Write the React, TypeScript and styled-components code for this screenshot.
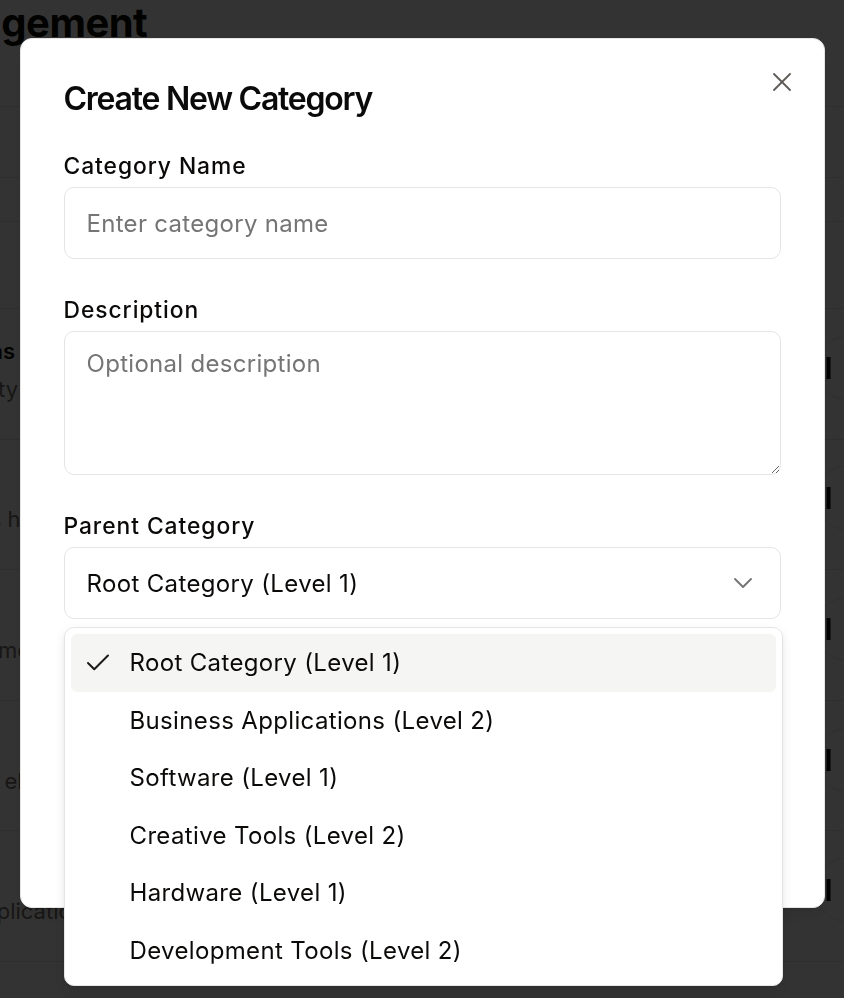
import React from 'react';
import styled, { createGlobalStyle } from 'styled-components';
import { Check, ChevronDown, X } from 'lucide-react';

const GlobalStyle = createGlobalStyle`
  html, body {
    margin: 0;
    padding: 0;
    height: 100%;
    overflow: hidden;
  }
  body {
    font-family: Inter, "Noto Sans", "Liberation Sans", sans-serif;
    background: #ffffff;
    color: #0c0a09;
  }
  * {
    box-sizing: border-box;
  }
`;

// ---- page behind the dialog (scrolled sideways) ----

const Page = styled.div`
  width: 1320px;
  margin-left: -244px;
  min-height: 100vh;
  background: #ffffff;
`;

const PageHeader = styled.header`
  display: flow-root;
  height: 107px;
  padding: 0 24px 0 0;
  border-bottom: 1px solid #e7e5e4;
`;

const PageTitle = styled.h1`
  margin: -5px 0 0 -48px;
  font-size: 40px;
  line-height: 56px;
  font-weight: 700;
  letter-spacing: -0.5px;
`;

const Toolbar = styled.div`
  height: 71px;
  border-bottom: 1px solid #e7e5e4;
`;

const TableHead = styled.div`
  height: 44px;
  border-bottom: 1px solid #e7e5e4;
`;

const HeadRow = styled.div`
  height: 87px;
  border-bottom: 1px solid #e7e5e4;
`;

const Row = styled.div`
  height: 130.6px;
  display: flex;
  align-items: center;
  justify-content: space-between;
  padding: 0 24px;
  border-bottom: 1px solid #e7e5e4;
`;

const NameCell = styled.div`
  display: flex;
  flex-direction: column;
  gap: 12px;
  margin-top: -8px;
`;

const RowName = styled.div`
  font-size: 22px;
  font-weight: 600;
`;

const RowDesc = styled.div`
  font-size: 22px;
  color: #78716c;
`;

const StatusPill = styled.div`
  width: 90px;
  height: 64px;
  margin-right: 147px;
  margin-top: -12px;
  padding-left: 10px;
  border: 1px solid #e7e5e4;
  border-radius: 32px;
  display: flex;
  align-items: center;
  color: #0c0a09;
`;

// ---- dialog ----

const Overlay = styled.div`
  position: fixed;
  inset: 0;
  background: rgba(0, 0, 0, 0.8);
  display: flex;
  justify-content: center;
  align-items: flex-start;
  padding-top: 38px;
`;

const Dialog = styled.div`
  position: relative;
  width: 805px;
  background: #ffffff;
  border: 1px solid #e7e5e4;
  border-radius: 12px;
  padding: 42px 43px 43px;
  box-shadow: 0 10px 15px -3px rgba(0, 0, 0, 0.1), 0 4px 6px -4px rgba(0, 0, 0, 0.1);
`;

const CloseButton = styled.button`
  position: absolute;
  top: 27px;
  right: 26px;
  width: 32px;
  height: 32px;
  padding: 0;
  border: none;
  background: none;
  color: #44403c;
  opacity: 0.85;
  display: flex;
  align-items: center;
  justify-content: center;
`;

const Title = styled.h2`
  margin: 0 0 35px;
  font-size: 32px;
  line-height: 36px;
  font-weight: 600;
  letter-spacing: -1.25px;
  color: #0a0a0a;
`;

const Form = styled.div`
  display: flex;
  flex-direction: column;
  gap: 37px;
`;

const Field = styled.div`
  display: flex;
  flex-direction: column;
  gap: 7px;
`;

const Label = styled.label`
  font-size: 22.8px;
  line-height: 28px;
  font-weight: 500;
  letter-spacing: 0.95px;
  color: #0c0a09;
`;

const TextInput = styled.input`
  height: 72px;
  width: 100%;
  padding: 0 22px;
  border: 1px solid #e7e5e4;
  border-radius: 10px;
  font-family: inherit;
  font-size: 24px;
  letter-spacing: 0.3px;
  color: #0c0a09;
  background: #ffffff;
  outline: none;

  ::placeholder {
    color: #78716c;
  }
`;

const TextArea = styled.textarea`
  height: 144px;
  width: 100%;
  padding: 15px 22px;
  border: 1px solid #e7e5e4;
  border-radius: 10px;
  font-family: inherit;
  font-size: 24px;
  line-height: 34px;
  letter-spacing: 0.3px;
  color: #0c0a09;
  background: #ffffff;
  resize: vertical;
  outline: none;

  ::placeholder {
    color: #78716c;
  }
`;

const SelectWrap = styled.div`
  position: relative;
`;

const SelectTrigger = styled.div`
  height: 72px;
  display: flex;
  align-items: center;
  justify-content: space-between;
  padding: 0 21px 0 22px;
  border: 1px solid #e7e5e4;
  border-radius: 10px;
  font-size: 24px;
  letter-spacing: 0.35px;
  color: #0c0a09;

  svg {
    color: #737373;
  }
`;

const Menu = styled.ul`
  position: absolute;
  top: calc(100% + 8px);
  left: 0;
  right: -2px;
  z-index: 10;
  margin: 0;
  padding: 6px;
  list-style: none;
  background: #ffffff;
  border: 1px solid #e7e5e4;
  border-radius: 10px;
  box-shadow: 0 4px 12px rgba(0, 0, 0, 0.08), 0 2px 4px rgba(0, 0, 0, 0.05);
`;

const MenuItem = styled.li<{ $active?: boolean }>`
  height: 57.5px;
  display: flex;
  align-items: center;
  gap: 17px;
  padding-left: 12px;
  border-radius: 6px;
  font-size: 24px;
  letter-spacing: 0.35px;
  color: #0c0a09;
  background: ${p => (p.$active ? '#f5f5f4' : 'transparent')};
`;

const CheckSlot = styled.span`
  width: 30px;
  height: 30px;
  display: flex;
  align-items: center;
  justify-content: center;
  color: #1c1917;
`;

const Footer = styled.div`
  display: flex;
  justify-content: flex-end;
  gap: 14px;
`;

const Button = styled.button<{ $primary?: boolean }>`
  height: 64px;
  padding: 0 28px;
  border-radius: 10px;
  font-family: inherit;
  font-size: 22px;
  font-weight: 500;
  border: 1px solid ${p => (p.$primary ? '#1c1917' : '#e7e5e4')};
  background: ${p => (p.$primary ? '#1c1917' : '#ffffff')};
  color: ${p => (p.$primary ? '#fafaf9' : '#0c0a09')};
`;

const rows = [
  { name: 'Business Applications', desc: 'Office and productivity ad' },
  { name: 'Software', desc: 'All software products here' },
  { name: 'Creative Tools', desc: 'Tools for design and media' },
  { name: 'Hardware', desc: 'Physical devices and electronic' },
  { name: 'Development Tools', desc: 'Programming and applications' },
];

const options = [
  'Root Category (Level 1)',
  'Business Applications (Level 2)',
  'Software (Level 1)',
  'Creative Tools (Level 2)',
  'Hardware (Level 1)',
  'Development Tools (Level 2)',
];

const Bar = () => (
  <svg width="5" height="22" viewBox="0 0 5 22">
    <rect x="0.5" y="0" width="4" height="22" fill="currentColor" />
  </svg>
);

export default function App() {
  return (
    <>
      <GlobalStyle />
      <Page>
        <PageHeader>
          <PageTitle>Category Management</PageTitle>
        </PageHeader>
        <Toolbar />
        <TableHead />
        <HeadRow />
        {rows.map(r => (
          <Row key={r.name}>
            <NameCell>
              <RowName>{r.name}</RowName>
              <RowDesc>{r.desc}</RowDesc>
            </NameCell>
            <StatusPill>
              <Bar />
            </StatusPill>
          </Row>
        ))}
      </Page>

      <Overlay>
        <Dialog>
          <CloseButton aria-label="Close">
            <X size={32} strokeWidth={1.4} />
          </CloseButton>
          <Title>Create New Category</Title>
          <Form>
            <Field>
              <Label>Category Name</Label>
              <TextInput placeholder="Enter category name" />
            </Field>
            <Field>
              <Label>Description</Label>
              <TextArea placeholder="Optional description" />
            </Field>
            <Field>
              <Label>Parent Category</Label>
              <SelectWrap>
                <SelectTrigger>
                  <span>Root Category (Level 1)</span>
                  <ChevronDown size={32} strokeWidth={1.4} />
                </SelectTrigger>
                <Menu>
                  {options.map((o, i) => (
                    <MenuItem key={o} $active={i === 0}>
                      <CheckSlot>{i === 0 && <Check size={30} strokeWidth={1.6} />}</CheckSlot>
                      {o}
                    </MenuItem>
                  ))}
                </Menu>
              </SelectWrap>
            </Field>
            <Field>
              <Label>Sort Order</Label>
              <TextInput placeholder="0" />
            </Field>
            <Footer>
              <Button>Cancel</Button>
              <Button $primary>Create Category</Button>
            </Footer>
          </Form>
        </Dialog>
      </Overlay>
    </>
  );
}
